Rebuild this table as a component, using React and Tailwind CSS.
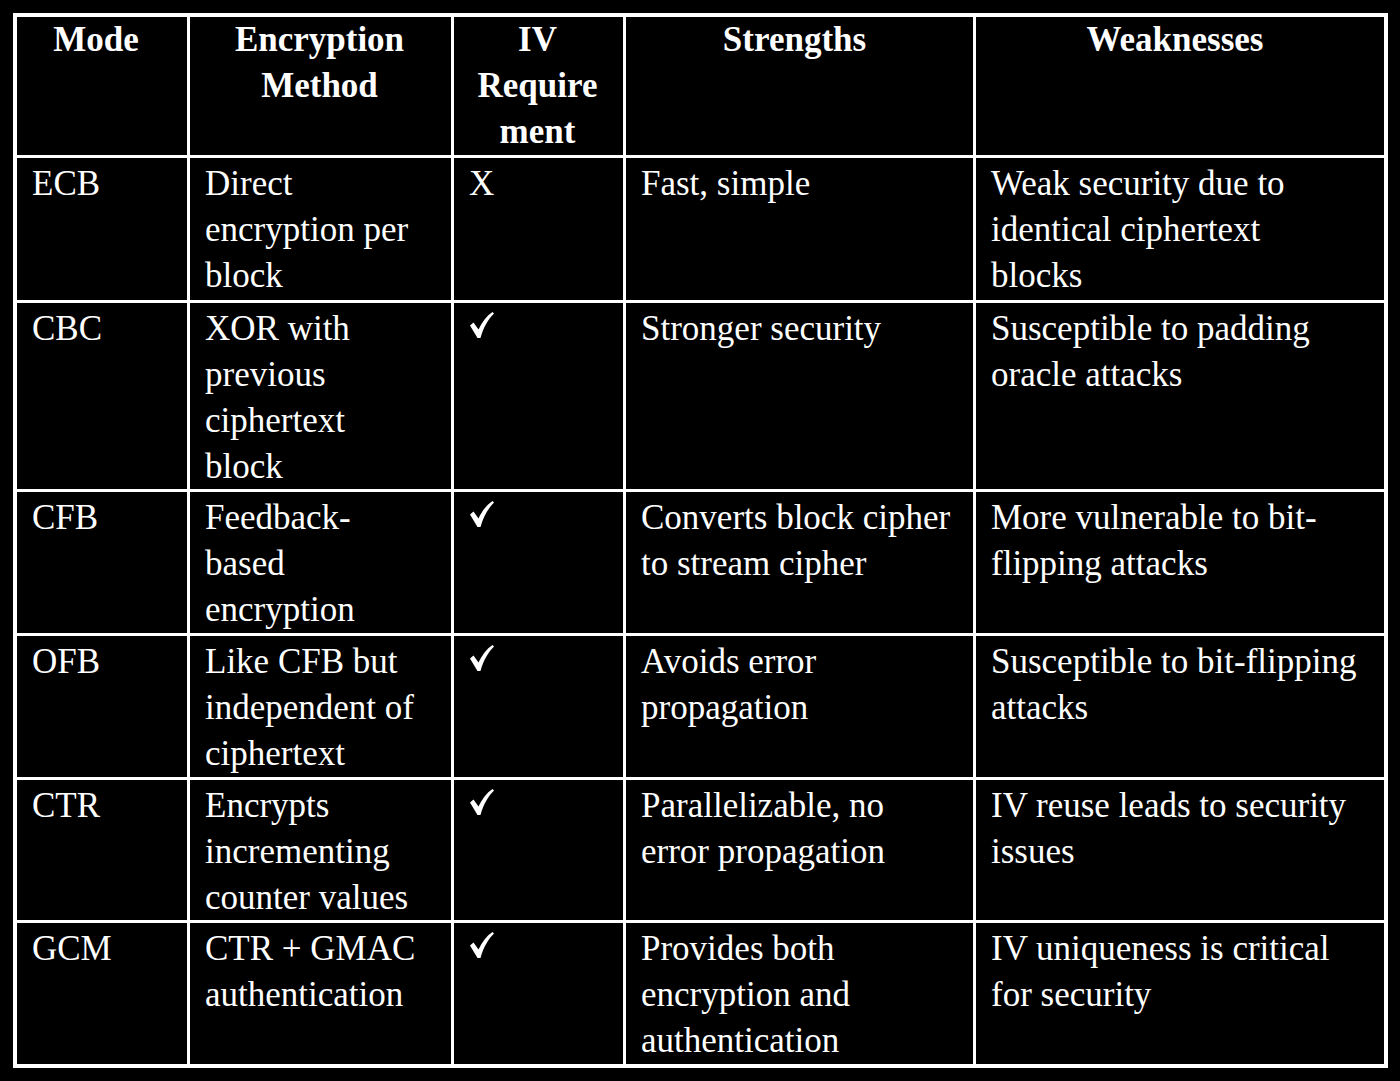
import React from "react";

const headers = [
  { lines: ["Mode"], pr: "pr-[27px]" },
  { lines: ["Encryption", "Method"], pr: "pr-[17px]" },
  { lines: ["IV", "Require", "ment"], pr: "pr-[17px]" },
  { lines: ["Strengths"], pr: "pr-[25px]" },
  { lines: ["Weaknesses"], pr: "pr-[25px]" },
];

const rows = [
  {
    mode: "ECB",
    method: ["Direct", "encryption per", "block"],
    iv: false,
    strengths: ["Fast, simple"],
    weaknesses: ["Weak security due to", "identical ciphertext", "blocks"],
  },
  {
    mode: "CBC",
    method: ["XOR with", "previous", "ciphertext", "block"],
    iv: true,
    strengths: ["Stronger security"],
    weaknesses: ["Susceptible to padding", "oracle attacks"],
  },
  {
    mode: "CFB",
    method: ["Feedback-", "based", "encryption"],
    iv: true,
    strengths: ["Converts block cipher", "to stream cipher"],
    weaknesses: ["More vulnerable to bit-", "flipping attacks"],
  },
  {
    mode: "OFB",
    method: ["Like CFB but", "independent of", "ciphertext"],
    iv: true,
    strengths: ["Avoids error", "propagation"],
    weaknesses: ["Susceptible to bit-flipping", "attacks"],
  },
  {
    mode: "CTR",
    method: ["Encrypts", "incrementing", "counter values"],
    iv: true,
    strengths: ["Parallelizable, no", "error propagation"],
    weaknesses: ["IV reuse leads to security", "issues"],
  },
  {
    mode: "GCM",
    method: ["CTR + GMAC", "authentication"],
    iv: true,
    strengths: ["Provides both", "encryption and", "authentication"],
    weaknesses: ["IV uniqueness is critical", "for security"],
  },
];

function Lines({ lines }) {
  return lines.map((line, i) => (
    <div key={i} className="whitespace-nowrap">
      {line}
    </div>
  ));
}

function Cell({ children }) {
  return <div className="bg-black px-[15px] pt-[3px]">{children}</div>;
}

function Check() {
  return (
    <svg width="24" height="26" viewBox="0 0 24 26" className="ml-px mt-[6px] block" aria-label="✓">
      <path
        d="M0 13.5 L3.5 10.5 L8.5 17.5 C12 10 16.5 4 22.5 0 L24 1.5 C18.5 7 13.5 15 10.5 26 L7.5 26 Z"
        fill="white"
      />
    </svg>
  );
}

export default function App() {
  return (
    <div className="min-h-screen bg-black pt-[13px] pl-[13px] font-['Liberation_Serif','Times_New_Roman',serif] text-[35px] leading-[46px] text-white">
      <div className="grid w-[1375px] grid-cols-[170px_261px_169px_347px_408px] grid-rows-[138px_142px_186px_141px_141px_140px_141px] gap-[3px] bg-white p-[4px]">
        {headers.map((h, i) => (
          <div key={i} className={"bg-black pl-[15px] text-center font-bold " + h.pr}>
            <Lines lines={h.lines} />
          </div>
        ))}
        {rows.map((r) => (
          <React.Fragment key={r.mode}>
            <Cell>{r.mode}</Cell>
            <Cell>
              <Lines lines={r.method} />
            </Cell>
            <Cell>{r.iv ? <Check /> : "X"}</Cell>
            <Cell>
              <Lines lines={r.strengths} />
            </Cell>
            <Cell>
              <Lines lines={r.weaknesses} />
            </Cell>
          </React.Fragment>
        ))}
      </div>
    </div>
  );
}
